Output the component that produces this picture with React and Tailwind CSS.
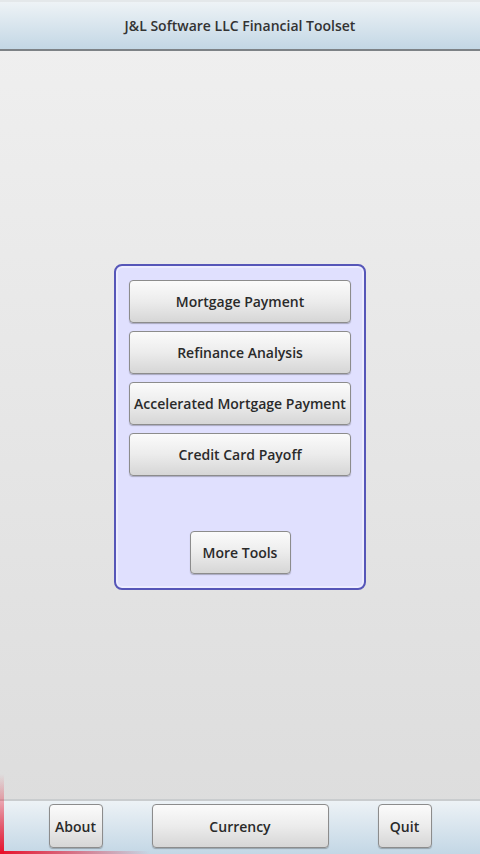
const font = { fontFamily: '"Open Sans", "DejaVu Sans", sans-serif' };

function ToolButton({ label, className = "" }) {
  return (
    <button
      className={`flex items-center justify-center whitespace-nowrap rounded-[4px] border border-[#8c8c8c] bg-gradient-to-b from-[#fbfbfb] via-[#ececec] to-[#d6d6d6] text-[14px] font-semibold text-[#2a2a2a] shadow-[0_1px_1px_rgba(0,0,0,0.25)] ${className}`}
    >
      {label}
    </button>
  );
}

export default function App() {
  const tools = [
    "Mortgage Payment",
    "Refinance Analysis",
    "Accelerated Mortgage Payment",
    "Credit Card Payoff",
  ];

  return (
    <div
      className="relative flex h-[854px] w-[480px] flex-col overflow-hidden bg-gradient-to-b from-[#f0f0f0] to-[#dcdcdc]"
      style={font}
    >
      <header className="flex h-[51px] items-center justify-center border-t-2 border-b-2 border-t-[#e4e8ea] border-b-[#7d8286] bg-gradient-to-b from-[#eef3f6] to-[#c3d7e5]">
        <h1 className="text-[14px] font-semibold text-[#333]">
          J&amp;L Software LLC Financial Toolset
        </h1>
      </header>

      <main className="flex flex-1 items-center justify-center pt-[3px]">
        <div className="flex h-[326px] w-[252px] flex-col rounded-[8px] border-2 border-[#5656b8] bg-[#e0e0fe] px-[13px] pt-[14px] pb-[14px] shadow-[inset_0_0_0_2px_#ececff]">
          <div className="flex flex-col gap-[8px]">
            {tools.map((t) => (
              <ToolButton key={t} label={t} className="h-[43px] w-[222px]" />
            ))}
          </div>
          <div className="mt-auto flex justify-center">
            <ToolButton label="More Tools" className="h-[43px] w-[101px]" />
          </div>
        </div>
      </main>

      <footer className="flex h-[55px] items-start justify-center gap-[49px] border-t-2 border-[#c9ccce] bg-gradient-to-b from-[#edf2f6] to-[#c3d7e5] pt-[3px]">
        <ToolButton label="About" className="h-[44px] w-[54px]" />
        <ToolButton label="Currency" className="h-[44px] w-[177px]" />
        <ToolButton label="Quit" className="h-[44px] w-[54px]" />
      </footer>

      <div className="pointer-events-none absolute bottom-0 left-0 h-[80px] w-[4px] bg-gradient-to-b from-transparent to-[#e8102a]" />
      <div className="pointer-events-none absolute bottom-0 left-0 h-[3px] w-[150px] bg-gradient-to-r from-[#e8102a] to-transparent" />
    </div>
  );
}
